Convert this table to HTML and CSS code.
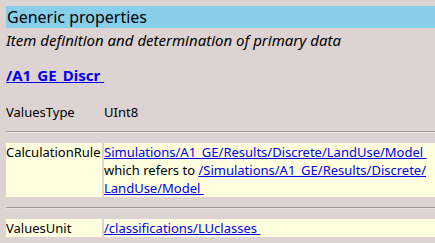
FILE: index.html
```html
<!DOCTYPE html>
<html>
<head>
<meta charset="utf-8">
<link rel="stylesheet" href="styles.css">
</head>
<body>
<div class="title">Generic properties</div>
<div class="subtitle">Item definition and determination of primary data</div>
<div class="name"><a href="#">/A1_GE_Discr&nbsp;</a></div>
<table class="props">
  <tr>
    <td class="key">ValuesType</td>
    <td class="val">UInt8</td>
  </tr>
  <tr><td colspan="2" class="sep"><hr></td></tr>
  <tr class="hl">
    <td class="key">CalculationRule</td>
    <td class="val"><a href="#">Simulations/A1_GE/Results/Discrete/LandUse/Model&nbsp;</a><br>which refers to <a href="#">/Simulations/A1_GE/Results/Discrete/<br>LandUse/Model&nbsp;</a></td>
  </tr>
  <tr><td colspan="2" class="sep"><hr></td></tr>
  <tr class="hl">
    <td class="key">ValuesUnit</td>
    <td class="val"><a href="#">/classifications/LUclasses&nbsp;</a></td>
  </tr>
</table>
</body>
</html>
```

FILE: styles.css
```css
html, body {
  background: #ddd3d2;
}
body {
  margin: 6px 0 0 6px;
  font-family: "Noto Sans", sans-serif;
  font-size: 13px;
  line-height: 18px;
  color: #000;
}
a {
  color: #0000ee;
  text-decoration: underline;
}
.title {
  background: #87ceeb;
  font-size: 16px;
  line-height: 22px;
  padding-left: 1px;
}
.subtitle {
  font-style: italic;
  font-size: 15px;
  margin-top: 3px;
  line-height: 18px;
}
.name {
  margin-top: 17px;
  font-weight: bold;
  font-size: 15px;
  line-height: 18px;
}
.props {
  margin-top: 17px;
  border-collapse: separate;
  border-spacing: 2px;
  margin-left: -2px;
  width: calc(100% + 4px);
}
.props td {
  padding: 0;
  vertical-align: top;
}
.key {
  width: 96px;
  white-space: nowrap;
}
.hl td {
  background: #ffffe0;
}
.sep hr {
  margin: 8px 0;
  border: 0;
  border-top: 1px solid #a09a9a;
  border-bottom: 1px solid #e8e2e2;
  height: 0;
}
```
